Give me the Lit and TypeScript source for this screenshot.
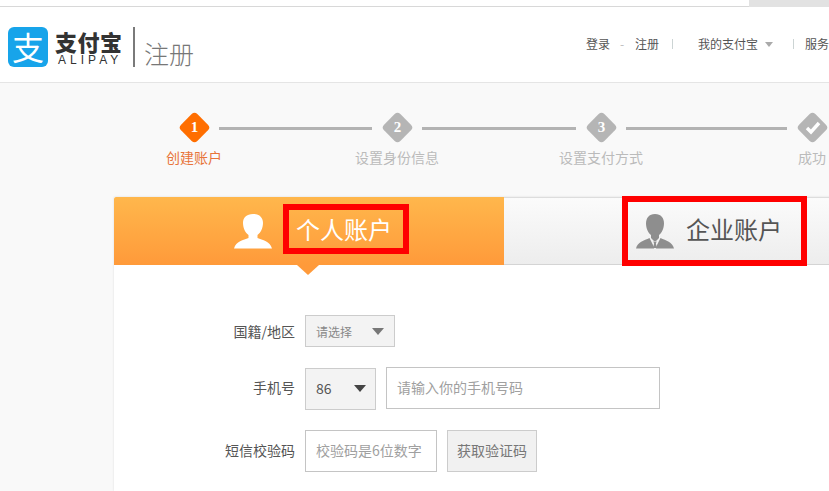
import { LitElement, html, css } from "lit";
import { customElement } from "lit/decorators.js";

const person = html`<svg width="38" height="36" viewBox="0 0 38 36"><path fill="#fff" d="M19 1c6.500 0 10 3.500 10 9 0 5-2.500 10-5.500 12v3c5 2 12.500 3 14.500 10.500H0C2 28 9.500 27 14.500 25v-3C11.500 20 9 15 9 10c0-5.500 3.500-9 10-9z"/></svg>`;
const biz = html`<svg width="38" height="36" viewBox="0 0 38 36"><path fill="#8e8e8e" d="M19 1c6 0 9 4 9 9.500 0 5-2.500 10-5 11.500v3l-3 3h-2l-3-3v-3c-2.500-1.500-5-6.500-5-11.500C10 5 13 1 19 1z"/><path fill="#8e8e8e" d="M13.500 25 18 34v1.500H0C1.500 29 8 27.500 13.500 25zM24.500 25C30 27.500 36.500 29 38 35.500H20V34z"/><path fill="#8e8e8e" d="M17.300 28.500h3.400l-.8 2 1 4.500h-3.800l1-4.500z"/></svg>`;
const check = html`<svg width="16" height="14" viewBox="0 0 16 14"><path fill="none" stroke="#fff" stroke-width="3.400" d="M2 7l4 4 8-9"/></svg>`;
const caret = (c: string, w: number) => html`<span class="caret" style="border-top-color:${c};border-width:${w * 0.6}px ${w / 2}px 0"></span>`;

@customElement("app-root")
export class AppRoot extends LitElement {
  static styles = css`
    :host { display: block; width: 829px; height: 491px; overflow: hidden; background: #f9f9f9; font-family: "Noto Sans CJK SC", "Liberation Sans", sans-serif; color: #555; }
    .strip { height: 6px; background: #fff; border-bottom: 1px solid #d8d8d8; display: flex; justify-content: flex-end; }
    .strip i { display: block; width: 80px; height: 7px; background: #e2e2e2; }
    header { height: 75px; background: #fff; border-bottom: 1px solid #e5e5e5; display: flex; align-items: flex-start; padding-left: 8px; position: relative; white-space: nowrap; box-sizing: content-box; }
    .logo-mark { width: 40px; height: 40px; margin-top: 20px; border-radius: 6px; background: #17a4ea; color: #fff; font-size: 32px; line-height: 39px; text-align: center; font-weight: 400; flex: none; }
    .logo-word { margin: 23px 0 0 7px; width: 68px; flex: none; }
    .logo-word b { display: block; font-size: 22px; line-height: 22px; color: #333; font-weight: 900; letter-spacing: 0.5px; }
    .logo-word span { display: block; font: 12px/12px "Liberation Sans", sans-serif; letter-spacing: 4px; color: #333; margin: 2px 0 0 3px; }
    .divider { width: 2px; height: 40px; background: #7a7a7a; margin: 20px 9px 0 10px; flex: none; }
    .title { font-size: 25px; line-height: 30px; margin-top: 31px; color: #777; font-weight: 300; }
    nav { margin-left: auto; display: flex; align-items: center; font-size: 12px; line-height: 18px; color: #555; height: 74px; flex: none; width: 243px; }
    nav .sep { width: 1px; height: 10px; background: #ccd4d4; flex: none; }
    nav .dash { color: #bbb; margin: 0 11px 0 10px; width: 4px; text-align: center; }
    .caret { display: inline-block; width: 0; height: 0; border-style: solid; border-color: transparent; flex: none; }
    .steps { display: flex; padding: 30px 0 0 180px; height: 84px; width: 700px; }
    .step { flex: none; }
    .track { display: flex; align-items: center; height: 29px; }
    .dia { width: 29px; height: 29px; flex: none; display: flex; align-items: center; justify-content: center; position: relative; color: #fff; font: bold 15px/1 "Liberation Serif", serif; }
    .dia::before { content: ""; position: absolute; left: 3px; top: 3px; width: 23px; height: 23px; border-radius: 4px; background: #b5b5b5; transform: rotate(45deg); }
    .dia.on::before { background: #ff6e00; }
    .dia > * { position: relative; }
    .line { flex: 1; height: 3px; margin: 2px 11px 0 10px; background: #b3b3b3; }
    .lab { width: 120px; margin: 5px 0 0 -46px; text-align: center; font-size: 14px; line-height: 20px; color: #bbb; }
    .lab.on { color: #e8743a; }
    .card { margin-left: 114px; width: 760px; background: #fff; height: 294px; box-shadow: 0 0 2px #ddd; }
    .tabs { display: flex; height: 68px; position: relative; }
    .tab { display: flex; align-items: center; height: 68px; position: relative; flex: none; box-sizing: border-box; }
    .tab.a { width: 390px; background: linear-gradient(#ffb74c, #ff9a3a); color: #fff; padding-left: 120px; font-size: 24px; border-radius: 2px 0 0 0; }
    .tab.a svg { margin-right: 24px; }
    .tab.a::after { content: ""; position: absolute; left: 183px; top: 68px; border-style: solid; border-width: 10px 11px 0; border-color: #ff9a3a transparent transparent; }
    .tab.b { width: 370px; background: linear-gradient(#fbfbfb, #ededed); border-top: 1px solid #ddd; border-bottom: 1px solid #d4d4d4; color: #555; padding-left: 132px; font-size: 24px; }
    .tab.b svg { margin-right: 12px; }
    .tab span { line-height: 32px; margin-top: -4px; }
    .mark { position: absolute; border: 6px solid #f00; box-sizing: border-box; pointer-events: none; }
    .mark.a { left: 169px; top: 7px; width: 126px; height: 50px; }
    .mark.b { left: 118px; top: -2px; width: 185px; height: 70px; }
    form { padding: 50px 0 0 0; display: flex; flex-direction: column; }
    .row { display: flex; align-items: center; }
    .row label { width: 181px; text-align: right; margin-right: 10px; font-size: 14px; color: #555; flex: none; }
    .row.r1 { height: 32px; }
    .row.r2 { height: 43px; margin-top: 20px; }
    .row.r2 label { padding-bottom: 4px; }
    .row.r3 { height: 42px; margin-top: 20px; }
    .row.r3 label { padding-bottom: 2px; }
    .sel { box-sizing: border-box; display: flex; align-items: center; justify-content: space-between; border: 1px solid #ccc; background: #f3f3f3; flex: none; }
    .sel.s1 { width: 90px; height: 32px; padding: 0 10px; font-size: 12px; color: #888; }
    .sel.s2 { width: 71px; height: 42px; padding: 0 9px 2px 10px; font-size: 14px; color: #555; margin-top: 1px; }
    .inp { box-sizing: border-box; height: 42px; border: 1px solid #c4c4c4; background: #fff; display: flex; align-items: center; padding: 0 0 2px 10px; font-size: 14px; color: #a0a0a0; flex: none; }
    .inp.phone { width: 274px; margin-left: 10px; margin-bottom: 1px; }
    .inp.code { width: 132px; }
    .btn { box-sizing: border-box; width: 90px; height: 42px; margin-left: 10px; border: 1px solid #ccc; background: #f1f1f1; font-size: 14px; color: #777; display: flex; align-items: center; justify-content: center; flex: none; padding-bottom: 2px; }
  `;

  render() {
    const steps = [
      { n: html`<span>1</span>`, l: "创建账户", w: 203, on: true },
      { n: html`<span>2</span>`, l: "设置身份信息", w: 204 },
      { n: html`<span>3</span>`, l: "设置支付方式", w: 211 },
      { n: check, l: "成功", w: 60, last: true },
    ];
    return html`
      <div class="strip"><i></i></div>
      <header>
        <div class="logo-mark">支</div>
        <div class="logo-word"><b>支付宝</b><span>ALIPAY</span></div>
        <div class="divider"></div>
        <div class="title">注册</div>
        <nav>
          <span>登录</span><span class="dash">-</span><span>注册</span>
          <span class="sep" style="margin:0 25px 0 13px"></span>
          <span>我的支付宝</span><span style="margin-left:7px;display:flex">${caret("#aaa", 9)}</span>
          <span class="sep" style="margin:0 11px 0 20px"></span>
          <span>服务</span>
        </nav>
      </header>
      <div class="steps">
        ${steps.map((s) => html`
          <div class="step" style="width:${s.w}px">
            <div class="track">
              <div class="dia ${s.on ? "on" : ""}">${s.n}</div>
              ${s.last ? "" : html`<div class="line"></div>`}
            </div>
            <div class="lab ${s.on ? "on" : ""}">${s.l}</div>
          </div>`)}
      </div>
      <section class="card">
        <div class="tabs">
          <div class="tab a">${person}<span>个人账户</span><div class="mark a"></div></div>
          <div class="tab b">${biz}<span>企业账户</span><div class="mark b"></div></div>
        </div>
        <form>
          <div class="row r1"><label>国籍/地区</label><div class="sel s1">请选择${caret("#777", 12)}</div></div>
          <div class="row r2"><label>手机号</label><div class="sel s2">86${caret("#444", 12)}</div><div class="inp phone">请输入你的手机号码</div></div>
          <div class="row r3"><label>短信校验码</label><div class="inp code">校验码是6位数字</div><div class="btn">获取验证码</div></div>
        </form>
      </section>
    `;
  }
}
